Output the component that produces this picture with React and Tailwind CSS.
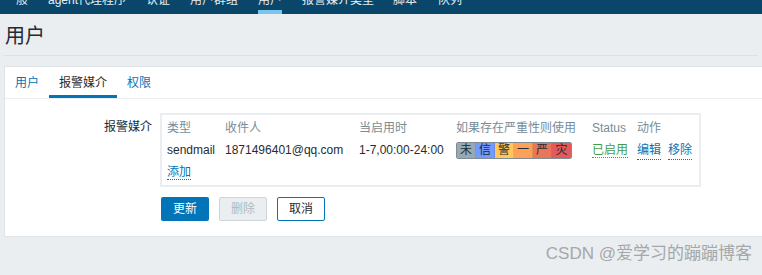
import React from "react";

const font = { fontFamily: '"Liberation Sans", Arial, "Noto Sans CJK SC", sans-serif' };

// top menu, only the lower half shows in the screenshot
const navItems = [
  { t: "一般", w: "w-[24px]" },
  { t: "agent代理程序", w: "w-[78px]" },
  { t: "认证", w: "w-[24px]" },
  { t: "用户群组", w: "w-[48px]" },
  { t: "用户", w: "w-[24px]", active: true },
  { t: "报警媒介类型", w: "w-[71px]" },
  { t: "脚本", w: "w-[25px]" },
  { t: "队列", w: "w-[24px]" },
];

const severities = [
  { t: "未", c: "bg-[#97aab3]" },
  { t: "信", c: "bg-[#7499ff]" },
  { t: "警", c: "bg-[#ffc859]" },
  { t: "一", c: "bg-[#ffa059]" },
  { t: "严", c: "bg-[#e97659]" },
  { t: "灾", c: "bg-[#e45959]" },
];

export default function App() {
  return (
    <div style={font} className="relative w-[762px] h-[275px] overflow-hidden bg-[#ebeef0] text-[#1f2c33] text-[12px]">
      <nav className="h-[14px] bg-[#0a466a] overflow-hidden flex gap-[20px] pl-[4px]">
        {navItems.map((n) => (
          <div key={n.t} className={`relative h-[14px] shrink-0 ${n.w}`}>
            <span className="block mt-[-8px] leading-[16px] text-[#e6edf2] whitespace-nowrap">{n.t}</span>
            {n.active && <span className="absolute left-0 right-0 bottom-0 h-[4px] bg-[#7cc4f0]" />}
          </div>
        ))}
      </nav>

      {/* title */}
      <header className="mx-[4px] h-[42px] border-b border-[#dbe0e3] flex items-center pl-[1px]">
        <h1 className="text-[20px] leading-none text-[#1f2c33] mt-[3px]">用户</h1>
      </header>

      {/* panel */}
      <section className="mt-[10px] ml-[4px] mr-[-4px] h-[171px] bg-white border border-[#dfe4e7]">
        <ul className="flex h-[32px] border-b border-[#ebeef0]">
          <li className="px-[10px] flex items-center text-[#0275b8]">用户</li>
          <li className="px-[10px] flex items-center border-b-[3px] border-[#0275b8] pt-[3px] text-[#1f2c33]">报警媒介</li>
          <li className="px-[10px] flex items-center text-[#0275b8]">权限</li>
        </ul>

        <div className="flex pt-[14px]">
          <div className="w-[147px] text-right pt-[5px]">报警媒介</div>
          <div className="ml-[8px]">
            <div className="w-[541px] h-[74px] border-2 border-[#ebeef0] px-[5px] pt-[2px]">
              <div className="flex h-[22px] items-center text-[#768d99]">
                <span className="w-[58px]">类型</span>
                <span className="w-[134px]">收件人</span>
                <span className="w-[97px]">当启用时</span>
                <span className="w-[136px]">如果存在严重性则使用</span>
                <span className="w-[45px]">Status</span>
                <span>动作</span>
              </div>
              <div className="flex h-[22px] items-center">
                <span className="w-[58px]">sendmail</span>
                <span className="w-[134px]">1871496401@qq.com</span>
                <span className="w-[97px]">1-7,00:00-24:00</span>
                <span className="w-[136px] flex">
                  <span className="flex border border-[#7f8c92] rounded-[2px] overflow-hidden">
                    {severities.map((s) => (
                      <span key={s.t} className={`${s.c} w-[19px] h-[15px] leading-[15px] text-center text-[#1f2c33] border-r border-black/10 last:border-r-0`}>{s.t}</span>
                    ))}
                  </span>
                </span>
                <span className="w-[45px]">
                  <span className="text-[#429e47] border-b border-dotted border-[#429e47]">已启用</span>
                </span>
                <span className="text-[#0275b8] border-b border-dotted border-[#0275b8]">编辑</span>
                <span className="ml-[7px] text-[#0275b8] border-b border-dotted border-[#0275b8]">移除</span>
              </div>
              <div className="flex h-[22px] items-center">
                <span className="text-[#0275b8] border-b border-dotted border-[#0275b8] leading-[14px]">添加</span>
              </div>
            </div>

            <div className="flex gap-[10px] mt-[10px] ml-[1px]">
              <button className="w-[48px] h-[24px] rounded-[2px] bg-[#0275b8] text-white">更新</button>
              <button className="w-[48px] h-[24px] rounded-[2px] bg-[#ebeef0] border border-[#ccd5d9] text-[#acbbc2]">删除</button>
              <button className="w-[48px] h-[24px] rounded-[2px] bg-white border border-[#0275b8] text-[#1f2c33]">取消</button>
            </div>
          </div>
        </div>
      </section>

      {/* watermark */}
      <div className="absolute right-[10px] bottom-[9px] text-[17px] text-[#a3a8ab] whitespace-nowrap">CSDN @爱学习的蹦蹦博客</div>
    </div>
  );
}
